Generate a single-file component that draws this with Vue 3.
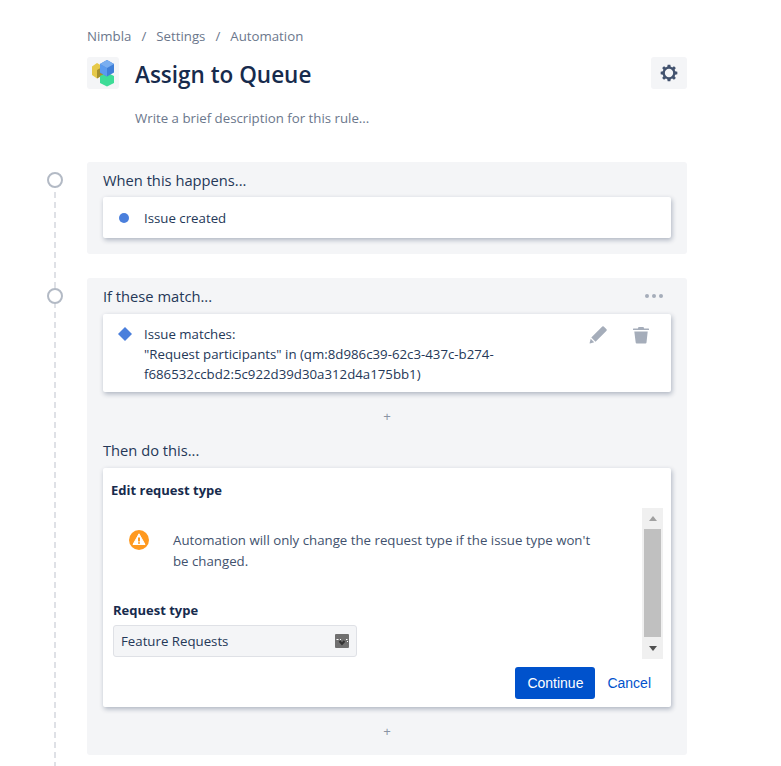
<script setup>
const crumbs = ['Nimbla', 'Settings', 'Automation']
</script>

<template>
  <div class="page">
    <nav class="crumbs">
      <template v-for="(c, i) in crumbs" :key="c">
        <span v-if="i" class="sep">/</span>
        <span>{{ c }}</span>
      </template>
    </nav>
    <header class="head">
      <div class="logo">
        <svg width="32" height="32" viewBox="0 0 32 32">
          <path d="M5 9.500 10 6l6 3.500V18l-6 3.500L5 18z" fill="#e6c94a"/>
          <path d="M10 13l6-3.500V18l-6 3.500z" fill="#a5902f"/>
          <path d="M13 19 20 15.500 27 19v7l-7 3.500L13 26z" fill="#3ddc97"/>
          <path d="M13 7 20 3 27 7v8.500l-7 4-7-4z" fill="#3f7fd8"/>
          <path d="M13 7 20 11v8.500l-7-4z" fill="#5b9bee"/>
          <path d="M13 7 20 3 27 7 20 11z" fill="#79aef0"/>
        </svg>
      </div>
      <h1>Assign to Queue</h1>
      <button class="gear" aria-label="Settings">
        <svg width="20" height="20" viewBox="0 0 24 24"><path fill="#42526e" fill-rule="evenodd" d="M13.600 2l.5 2.600c.6.200 1.200.4 1.700.7l2.200-1.500 2.200 2.200-1.500 2.200c.3.500.6 1.100.7 1.700l2.600.5v3.200l-2.600.5c-.2.600-.4 1.200-.7 1.700l1.500 2.200-2.200 2.200-2.200-1.500c-.5.300-1.100.6-1.700.7l-.5 2.600h-3.200l-.5-2.600c-.6-.2-1.200-.4-1.700-.7l-2.200 1.500-2.200-2.200 1.500-2.200c-.3-.5-.6-1.100-.7-1.700L2 13.600v-3.200l2.600-.5c.2-.6.4-1.200.7-1.700L3.800 6l2.200-2.200 2.200 1.500c.5-.3 1.100-.6 1.700-.7l.5-2.600zM12 7a5 5 0 1 0 0 10 5 5 0 0 0 0-10z"/></svg>
      </button>
    </header>
    <p class="desc">Write a brief description for this rule...</p>

    <div class="flow">
      <div class="line"></div>

      <section class="step first">
        <span class="dot"></span>
        <div class="panel">
          <div class="label">When this happens...</div>
          <div class="card row">
            <span class="bullet"></span>
            <span>Issue created</span>
          </div>
        </div>
      </section>

      <section class="step">
        <span class="dot"></span>
        <div class="panel">
          <div class="label between">
            <span>If these match...</span>
            <span class="more"><i></i><i></i><i></i></span>
          </div>
          <div class="card row cond">
            <svg class="diamond" width="14" height="14" viewBox="0 0 14 14"><path d="M7 0l7 7-7 7-7-7z" fill="#4a7fdc"/></svg>
            <div class="cond-text">Issue matches:<br>"Request participants" in (qm:8d986c39-62c3-437c-b274-f686532ccbd2:5c922d39d30a312d4a175bb1)</div>
            <div class="tools">
              <svg width="20" height="20" viewBox="0 0 20 20"><path fill="#a5adba" d="M14.300 1.500a1 1 0 0 1 1.400 0l2.800 2.800a1 1 0 0 1 0 1.400L7.500 16.700 3.300 12.500zM2.700 13.800l3.500 3.500-4.200 1.100a.3.300 0 0 1-.4-.4z"/></svg>
              <svg width="18" height="18" viewBox="0 0 18 18"><path fill="#a5adba" d="M6.500 1h5l.6 1.500h4.400a.5.500 0 0 1 .5.500v1H1V3a.5.500 0 0 1 .5-.5h4.400zM2.300 5.500h13.400l-1.200 11a1 1 0 0 1-1 .9h-8.800a1 1 0 0 1-1-.9z"/></svg>
            </div>
          </div>
          <div class="plus">+</div>
          <div class="label then">Then do this...</div>
          <div class="card editor">
            <div class="ed-title">Edit request type</div>
            <div class="ed-body">
              <div class="ed-scroll">
                <div class="notice">
                  <svg width="20" height="20" viewBox="0 0 20 20"><circle cx="10" cy="10" r="10" fill="#ff991f"/><path d="M10 3.800l6 10.700H4z" fill="#fff" stroke="#fff" stroke-linejoin="round"/><path d="M9 7.500h2v4H9zM9 12.200h2v1.600H9z" fill="#ff991f"/></svg>
                  <p>Automation will only change the request type if the issue type won't be changed.</p>
                </div>
                <div class="field-label">Request type</div>
                <div class="select">
                  <span>Feature Requests</span>
                  <svg width="14" height="14" viewBox="0 0 14 14"><rect width="14" height="14" rx="1" fill="#707070"/><path d="M1.500 5.500h2M5 5.500h1M11 5.500h1.500M12.500 7v1" stroke="#fff" fill="none"/><path d="M4.500 7l2.500 3 2.500-3" stroke="#333" stroke-width="2" fill="none"/></svg>
                </div>
              </div>
              <div class="scrollbar">
                <span class="arr up"></span>
                <span class="thumb"></span>
                <span class="arr down"></span>
              </div>
            </div>
            <div class="actions">
              <button class="primary">Continue</button>
              <a class="cancel">Cancel</a>
            </div>
          </div>
          <div class="plus last">+</div>
        </div>
      </section>
    </div>
  </div>
</template>

<style>
html, body { margin: 0; background: #fff; overflow: hidden; }
</style>

<style scoped>
.page {
  width: 781px;
  height: 766px;
  overflow: hidden;
  box-sizing: border-box;
  padding: 28px 0 0 87px;
  font-family: "Open Sans", sans-serif;
  font-size: 13.25px;
  color: #172b4d;
}
.crumbs {
  display: flex;
  gap: 10px;
  height: 17px;
  line-height: 17px;
  color: #6b778c;
}
.head {
  display: flex;
  align-items: center;
  width: 600px;
  height: 32px;
  margin-top: 12px;
}
.logo {
  width: 32px;
  height: 32px;
  border-radius: 3px;
  background: #f4f5f7;
}
h1 {
  margin: 4px 0 0 16px;
  flex: 1;
  font-size: 22.5px;
  font-weight: 600;
  line-height: 32px;
  color: #172b4d;
}
.gear {
  width: 36px;
  height: 32px;
  padding: 0;
  border: 0;
  border-radius: 3px;
  background: #f4f5f7;
  display: flex;
  align-items: center;
  justify-content: center;
}
.desc {
  margin: 20px 0 0 48px;
  line-height: 18px;
  color: #6b778c;
}
.flow {
  position: relative;
  margin-top: 35px;
  width: 600px;
}
.line {
  position: absolute;
  left: -33px;
  top: 20px;
  width: 2px;
  height: 640px;
  background: repeating-linear-gradient(to bottom, #dfe1e6 0 6px, transparent 6px 10px);
}
.step { position: relative; margin-top: 24px; }
.step.first { margin-top: 0; }
.dot {
  position: absolute;
  left: -40px;
  top: 10px;
  width: 12px;
  height: 12px;
  border: 2px solid #b3bac5;
  border-radius: 50%;
  background: #fff;
}
.panel {
  background: #f4f5f7;
  border-radius: 3px;
  padding: 8px 16px 16px;
}
.label {
  font-size: 14.7px;
  line-height: 20px;
  color: #253858;
  margin-bottom: 7px;
}
.between {
  display: flex;
  justify-content: space-between;
  align-items: center;
  margin-bottom: 8px;
}
.more { display: flex; gap: 3px; margin-right: 8px; }
.more i { width: 4px; height: 4px; border-radius: 50%; background: #a5adba; }
.card {
  background: #fff;
  border-radius: 2px;
  box-shadow: 1px 2px 5px rgba(9, 30, 66, .3);
}
.row {
  display: flex;
  align-items: center;
  min-height: 41px;
  padding-left: 16px;
  color: #253858;
}
.bullet {
  width: 10px;
  height: 10px;
  margin-right: 15px;
  border-radius: 50%;
  background: #4a7fdc;
}
.cond {
  align-items: flex-start;
  height: 78px;
  padding: 10px 16px 0 15px;
  box-sizing: border-box;
  position: relative;
  line-height: 20px;
}
.diamond { margin: 3px 12px 0 0; }
.cond-text { width: 370px; }
.tools {
  margin-left: auto;
  margin-right: 5px;
  margin-top: 1px;
  display: flex;
  gap: 24px;
  align-items: center;
}
.plus {
  height: 20px;
  margin-top: 14px;
  text-align: center;
  line-height: 20px;
  color: #8993a4;
}
.then { margin-top: 14px; margin-bottom: 8px; }
.plus.last { margin-bottom: -2px; margin-top: 14px; }
.editor { height: 239px; padding: 14px 8px 0; box-sizing: border-box; }
.ed-title { font-size: 13px; font-weight: 700; line-height: 17px; color: #172b4d; }
.ed-body { display: flex; margin-top: 9px; height: 151px; }
.ed-scroll { flex: 1; padding: 0 0 0 2px; min-width: 0; }
.notice {
  display: flex;
  align-items: flex-start;
  padding: 21px 40px 0 16px;
}
.notice svg { flex: none; margin-top: 1px; }
.notice p {
  margin: 1px 0 0 24px;
  line-height: 21px;
  color: #42526e;
}
.field-label {
  margin-top: 30px;
  font-size: 13px;
  font-weight: 700;
  line-height: 17px;
  color: #172b4d;
}
.select {
  display: flex;
  align-items: center;
  justify-content: space-between;
  box-sizing: border-box;
  width: 244px;
  height: 32px;
  margin-top: 6px;
  padding: 0 7px;
  background: #f4f5f7;
  border: 1px solid #dfe1e6;
  border-radius: 3px;
  color: #253858;
}
.scrollbar {
  width: 21px;
  height: 151px;
  background: #f0f0f0;
  display: flex;
  flex-direction: column;
  align-items: center;
  flex: none;
}
.thumb { width: 17px; height: 108px; background: #c0c0c0; }
.arr { height: 21px; display: flex; align-items: center; justify-content: center; }
.arr::before {
  content: "";
  border-left: 4.500px solid transparent;
  border-right: 4.500px solid transparent;
}
.up::before { border-bottom: 5px solid #a0a0a0; }
.down { height: 22px; }
.down::before { border-top: 5px solid #505050; }
.actions {
  display: flex;
  justify-content: flex-end;
  align-items: center;
  margin-top: 8px;
  padding-right: 12px;
  font-family: "Liberation Sans", sans-serif;
  font-size: 14px;
}
.primary {
  width: 80px;
  height: 32px;
  border: 0;
  border-radius: 3px;
  background: #0052cc;
  color: #fff;
  font: inherit;
}
.cancel { margin-left: 12px; color: #0052cc; }
</style>
